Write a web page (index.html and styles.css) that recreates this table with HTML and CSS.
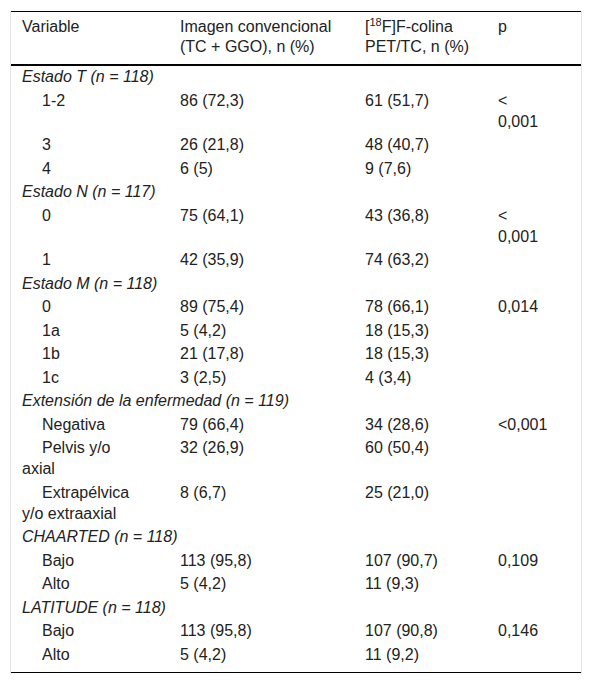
FILE: index.html
```html
<!DOCTYPE html>
<html lang="es">
<head>
<meta charset="utf-8">
<link rel="stylesheet" href="styles.css">
</head>
<body>
<div class="frame">
<table class="data">
<colgroup>
<col class="c1"><col class="c2"><col class="c3"><col class="c4">
</colgroup>
<thead>
<tr>
<th>Variable</th>
<th>Imagen convencional<br>(TC + GGO), n (%)</th>
<th>[<sup>18</sup>F]F-colina<br>PET/TC, n (%)</th>
<th>p</th>
</tr>
</thead>
<tbody>
<tr class="group"><td colspan="4">Estado T (n = 118)</td></tr>
<tr><td class="sub">1-2</td><td>86 (72,3)</td><td>61 (51,7)</td><td>&lt;<br>0,001</td></tr>
<tr><td class="sub">3</td><td>26 (21,8)</td><td>48 (40,7)</td><td></td></tr>
<tr><td class="sub">4</td><td>6 (5)</td><td>9 (7,6)</td><td></td></tr>
<tr class="group"><td colspan="4">Estado N (n = 117)</td></tr>
<tr><td class="sub">0</td><td>75 (64,1)</td><td>43 (36,8)</td><td>&lt;<br>0,001</td></tr>
<tr><td class="sub">1</td><td>42 (35,9)</td><td>74 (63,2)</td><td></td></tr>
<tr class="group"><td colspan="4">Estado M (n = 118)</td></tr>
<tr><td class="sub">0</td><td>89 (75,4)</td><td>78 (66,1)</td><td>0,014</td></tr>
<tr><td class="sub">1a</td><td>5 (4,2)</td><td>18 (15,3)</td><td></td></tr>
<tr><td class="sub">1b</td><td>21 (17,8)</td><td>18 (15,3)</td><td></td></tr>
<tr><td class="sub">1c</td><td>3 (2,5)</td><td>4 (3,4)</td><td></td></tr>
<tr class="group"><td colspan="4">Extensión de la enfermedad (n = 119)</td></tr>
<tr><td class="sub">Negativa</td><td>79 (66,4)</td><td>34 (28,6)</td><td>&lt;0,001</td></tr>
<tr><td class="sub">Pelvis y/o<br>axial</td><td>32 (26,9)</td><td>60 (50,4)</td><td></td></tr>
<tr><td class="sub">Extrapélvica<br>y/o extraaxial</td><td>8 (6,7)</td><td>25 (21,0)</td><td></td></tr>
<tr class="group"><td colspan="4">CHAARTED (n = 118)</td></tr>
<tr><td class="sub">Bajo</td><td>113 (95,8)</td><td>107 (90,7)</td><td>0,109</td></tr>
<tr><td class="sub">Alto</td><td>5 (4,2)</td><td>11 (9,3)</td><td></td></tr>
<tr class="group"><td colspan="4">LATITUDE (n = 118)</td></tr>
<tr><td class="sub">Bajo</td><td>113 (95,8)</td><td>107 (90,8)</td><td>0,146</td></tr>
<tr class="last"><td class="sub">Alto</td><td>5 (4,2)</td><td>11 (9,2)</td><td></td></tr>
</tbody>
</table>
</div>
</body>
</html>
```
FILE: styles.css
```css
html, body {
  margin: 0;
  padding: 0;
  background: #fff;
}

body {
  font-family: "Liberation Sans", Arial, sans-serif;
  font-size: 16px;
  color: #222;
}

.frame {
  margin: 11px 10px 0 10px;
  width: 570px;
  border-left: 1px solid #e4e4e4;
  border-right: 1px solid #e4e4e4;
}

.data {
  width: 570px;
  border-collapse: collapse;
  table-layout: fixed;
}

.c1 { width: 158px; }
.c2 { width: 185px; }
.c3 { width: 133px; }
.c4 { width: 94px; }

.data thead tr {
  border-top: 1px solid #000;
  border-bottom: 2px solid #000;
}

.data th {
  font-weight: normal;
  text-align: left;
  vertical-align: top;
  line-height: 20px;
  padding: 5px 11px 7px 11px;
  white-space: nowrap;
}

.data td {
  vertical-align: top;
  line-height: 21px;
  padding: 0 11px 2.5px 11px;
  white-space: nowrap;
}

.data sup {
  font-size: 11px;
  line-height: 0;
  vertical-align: 6px;
}

.group td {
  font-style: italic;
}

.sub {
  text-indent: 20px;
}

.data tbody tr.last {
  border-bottom: 1px solid #000;
}

.data tr.last td {
  padding-bottom: 7px;
}
```
